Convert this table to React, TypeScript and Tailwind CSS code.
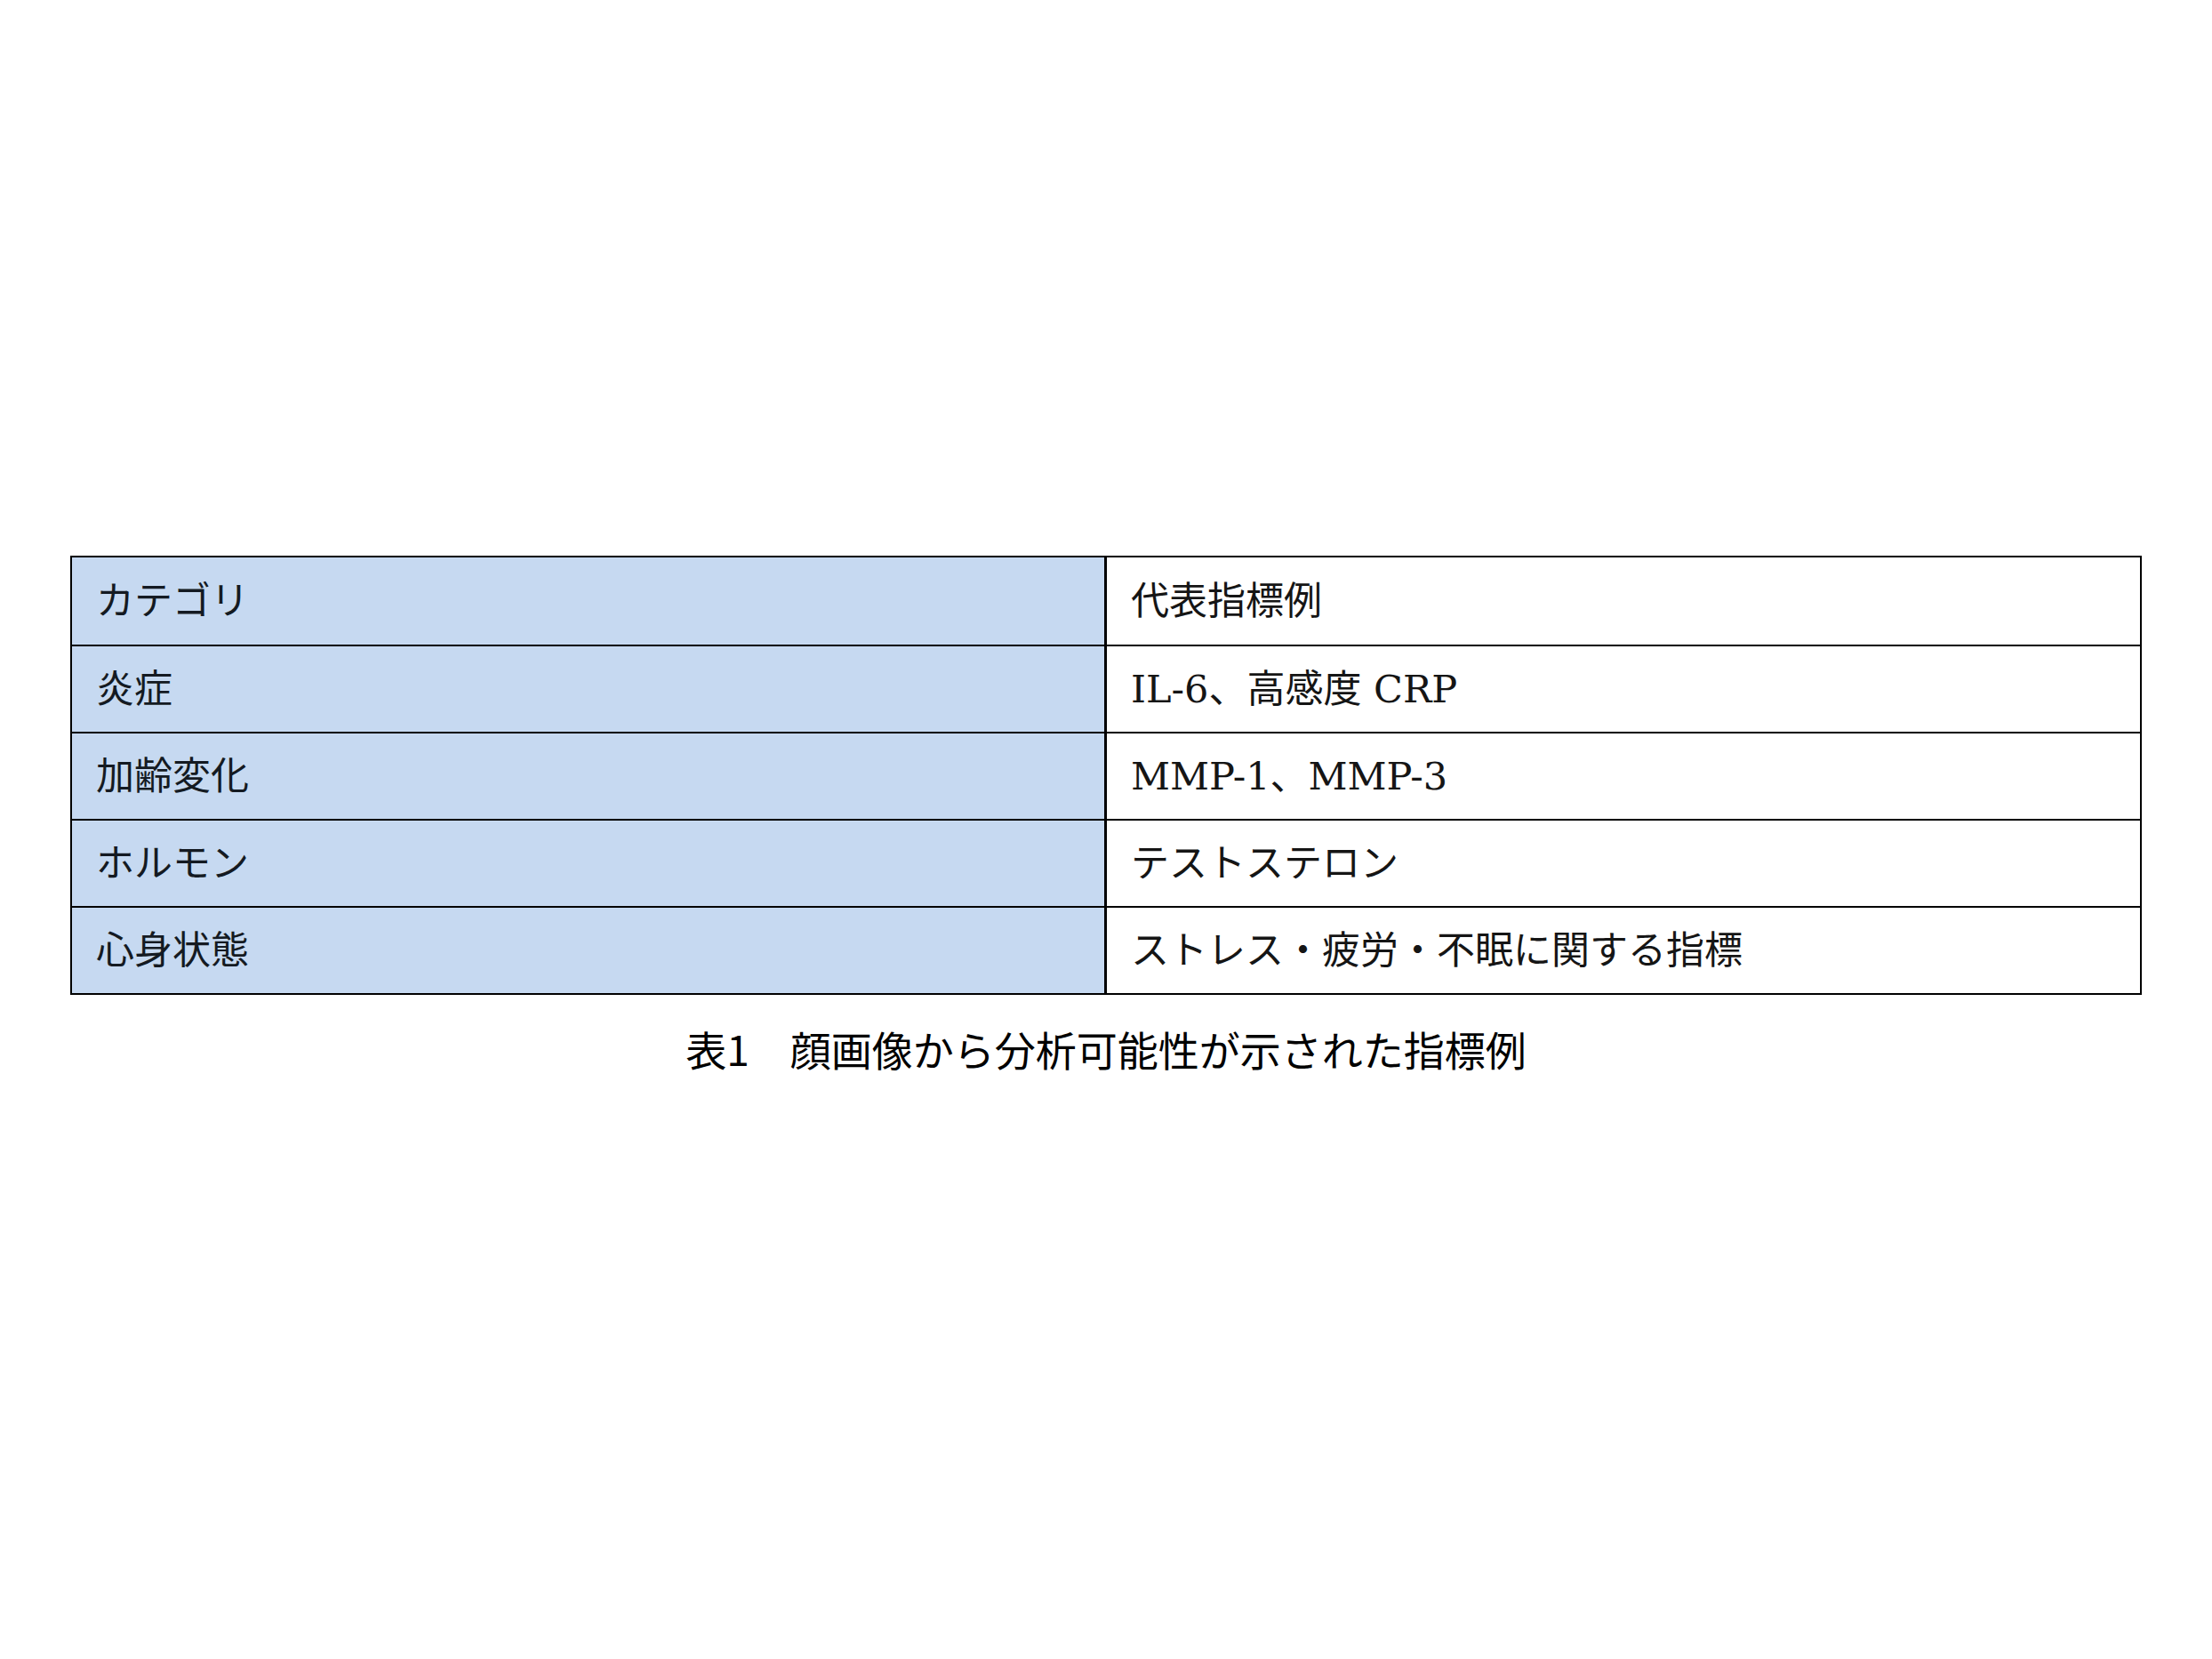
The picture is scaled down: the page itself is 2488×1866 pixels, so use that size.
const rows: [string, string][] = [
  ['カテゴリ', '代表指標例'],
  ['炎症', 'IL-6、高感度 CRP'],
  ['加齢変化', 'MMP-1、MMP-3'],
  ['ホルモン', 'テストステロン'],
  ['心身状態', 'ストレス・疲労・不眠に関する指標'],
]

const cellFont = { fontFamily: '"DejaVu Serif", "Noto Sans CJK JP", serif' }

export default function App() {
  return (
    <div className="min-h-[1866px] w-full bg-white px-[79px] pt-[625px]">
      <div className="border-2 border-black" style={cellFont}>
        {rows.map(([category, example], i) => (
          <div
            key={category}
            className={`grid h-[98px] grid-cols-[1164px_1fr] ${i > 0 ? 'border-t-2 border-black' : ''}`}
          >
            <div className="flex items-center border-r-[3px] border-black bg-[#C6D9F1] pl-[27px] text-[43px] leading-none text-[#141a22]">
              {category}
            </div>
            <div className="flex items-center bg-white pl-[27px] text-[43px] leading-none text-[#151515]">
              {example}
            </div>
          </div>
        ))}
      </div>
      <p
        className="mt-[26px] text-center text-[46px] leading-[1.5] text-black"
        style={{ fontFamily: '"Noto Sans CJK JP", sans-serif' }}
      >
        表1　顔画像から分析可能性が示された指標例
      </p>
    </div>
  )
}
